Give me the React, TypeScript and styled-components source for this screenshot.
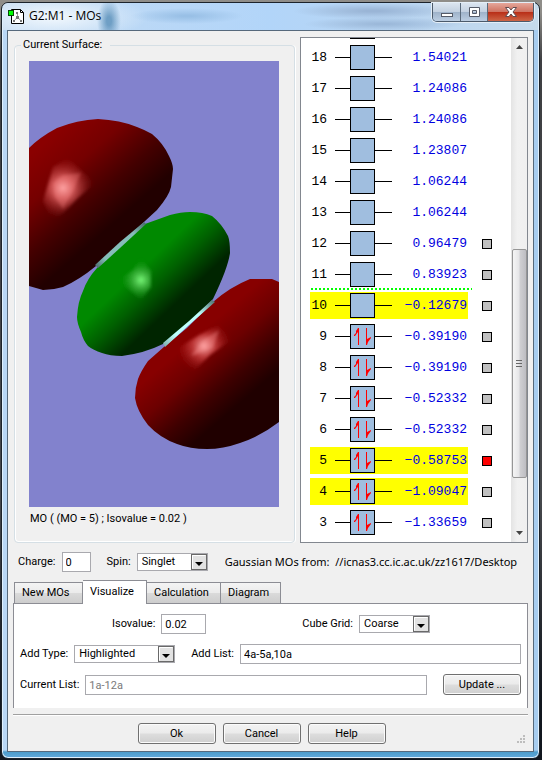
import React, { useState } from 'react';
import styled, { createGlobalStyle, css } from 'styled-components';

const GlobalStyle = createGlobalStyle`
  *, *::before, *::after { box-sizing: border-box; }
  body {
    margin: 0;
    background: #10151c;
    color: #000;
    font: 11px/16px "Roboto", "Liberation Sans", sans-serif;
  }
  button, input, select { font: inherit; color: inherit; }
`;

const Desktop = styled.div`
  display: flex;
  min-height: 100vh;
  padding: 2px 2px 1px 1px;
  background: linear-gradient(#8f8d89 0, #8f8d89 12px, #3e3f42 60px, #46484c 500px, #11161e 700px);
`;

const Window = styled.main`
  flex: 1;
  min-width: 0;
  display: flex;
  flex-direction: column;
  padding: 0 5px 6px;
  border: 1px solid #1c232b;
  border-radius: 7px;
  box-shadow: inset 0 0 0 1px #e0f0fd;
  background:
    linear-gradient(transparent calc(100% - 8px), #4c9ccb calc(100% - 6px), #62a9db 100%),
    linear-gradient(90deg, #b9d7f5 0, #b4d4f5 50%, #a7cdf0 100%);
`;

const TitleBar = styled.header`
  display: flex;
  align-items: flex-start;
  height: 27px;
  margin: 0 -4px;
  padding-right: 4px;
  border-radius: 6px 6px 0 0;
  background:
    radial-gradient(ellipse 12px 22px at 106px 18px, #6f9fc5 20%, transparent 100%),
    radial-gradient(ellipse 56px 8px at 184px 13px, #99c0e6 10%, transparent 100%),
    radial-gradient(ellipse 80px 8px at 370px 8px, #9ab5d6 10%, transparent 100%),
    radial-gradient(ellipse 80px 7px at 380px 21px, #9cb9da 10%, transparent 100%),
    radial-gradient(ellipse 95px 24px at 50px 14px, #edf5fc 10%, transparent 100%),
    linear-gradient(90deg, #c3dbf3, #b2d5f9 50%, #b9d5f1 75%, #c6dbec);
`;

const TitleText = styled.h1`
  flex: 1;
  margin: 4px 0 0 4px;
  font: 12px/18px "Open Sans", "Noto Sans", sans-serif;
`;

const AppIcon = styled.svg`
  margin: 5px 0 0 5px;
`;

const WindowButtons = styled.div`
  display: flex;
  border: 1px solid #4b5a6b;
  border-top: 0;
  border-radius: 0 0 5px 5px;
  overflow: hidden;
  box-shadow: 0 0 0 1px #e4eef7;
`;

const CaptionButton = styled.button<{ $danger?: boolean }>`
  display: grid;
  place-items: center;
  width: ${(p) => (p.$danger ? 46 : 27)}px;
  height: 18px;
  padding: 0;
  border: 0;
  background: ${(p) =>
    p.$danger
      ? 'linear-gradient(#e5a79b, #cf7362 48%, #b92f18 52%, #cd6546)'
      : 'linear-gradient(#dbe5f0, #c3d1e1 48%, #9fb3ca 52%, #bccee2)'};
  & + & { border-left: 1px solid #5a6a7b; }
`;

const Client = styled.section`
  flex: 1;
  display: flex;
  flex-direction: column;
  padding: 6px 5px 7px;
  border: 1px solid #56697c;
  background: #f0f0f0;
`;

const Split = styled.div`
  display: grid;
  grid-template-columns: minmax(0, 1fr) 228px;
  gap: 5px;
`;

const Group = styled.fieldset`
  min-width: 0;
  margin: 0 0 0 1px;
  padding: 8px 15px 14px 14px;
  border: 1px solid #d5dfe5;
  border-radius: 4px;
  box-shadow: inset 1px -1px 0 #fff, 1px 0 0 #fff;
  legend {
    margin-left: -8px;
    padding: 0 8px 0 2px;
  }
`;

const Surface = styled.svg`
  display: block;
  width: 100%;
  height: 446px;
  background: #8282cd;
`;

const Caption = styled.p`
  margin: 4px 1px 0;
`;

const ListPane = styled.div`
  display: flex;
  height: 506px;
  border: 1px solid #82878f;
  background: #fff;
`;

const Orbitals = styled.ol`
  flex: 1;
  display: flex;
  flex-direction: column;
  justify-content: flex-end;
  margin: 0;
  padding: 0 0 4px 9px;
  overflow: hidden;
  list-style: none;
  font: 13px/27px "Liberation Mono", monospace;
`;

const Orbital = styled.li<{ $gap?: boolean }>`
  flex: none;
  display: flex;
  align-items: center;
  gap: 14px;
  height: 31px;
  ${(p) =>
    p.$gap &&
    css`
      background: repeating-linear-gradient(90deg, #0f0 0 2px, transparent 2px 4px) 1px 100% / 161px 2px no-repeat;
    `}
`;

const Level = styled.div<{ $lit: boolean }>`
  display: grid;
  grid-template-columns: 17px 58px 1fr;
  column-gap: 8px;
  align-items: center;
  width: 158px;
  height: 27px;
  padding-right: 1px;
  text-align: right;
  background: ${(p) => (p.$lit ? '#ff0' : 'transparent')};
`;

const Energy = styled.span`
  margin-left: -8px;
  color: #0000e0;
`;

const Pick = styled.input<{ $hot: boolean }>`
  appearance: none;
  width: 10px;
  height: 10px;
  margin: 0;
  border: 1px solid #000;
  background: ${(p) => (p.$hot ? '#f00' : '#c0c0c0')};
`;

const ScrollBar = styled.div`
  display: grid;
  grid-template-rows: 17px 194px 229px 46px 1fr;
  justify-items: center;
  width: 16px;
  background: linear-gradient(90deg, #e4e4e4, #f1f1f1 40%, #efefef);
`;

const ScrollButton = styled.button<{ $row: number }>`
  grid-row: ${(p) => p.$row};
  width: 16px;
  padding: 0;
  border: 0;
  background: none;
  display: grid;
  place-items: center;
`;

const Thumb = styled.div`
  grid-row: 3;
  display: grid;
  place-items: center;
  width: 15px;
  border: 1px solid #969696;
  border-radius: 2px;
  background: linear-gradient(90deg, #f5f5f5, #e6e6e8 45%, #cfcfd2 55%, #bdbdc2);
`;

const Row = styled.div`
  display: flex;
  align-items: center;
`;

const StatusRow = styled(Row)`
  margin: 9px 6px 8px 5px;
  height: 20px;
`;

const Label = styled.label`
  flex: none;
  margin-right: 6px;
`;

const SecondLabel = styled(Label)`
  margin-left: 16px;
`;

const PathText = styled.p`
  flex: 1;
  margin: 0 0 0 17px;
  overflow: hidden;
  white-space: pre;
  font: 11px/18px "Noto Sans", "Open Sans", sans-serif;
`;

const TextBox = styled.input<{ $w?: number }>`
  ${(p) => (p.$w ? css`width: ${p.$w}px;` : css`flex: 1; min-width: 0;`)}
  height: 20px;
  padding: 1px 3px 0;
  border: 1px solid #a9a9ae;
  background: #fff;
  &:read-only { color: #7a7a7a; }
`;

const SelectBox = styled.span<{ $w: number }>`
  position: relative;
  flex: none;
  width: ${(p) => p.$w}px;
  height: 18px;
  svg {
    position: absolute;
    top: 1px;
    right: 1px;
    pointer-events: none;
  }
  select {
    display: block;
    appearance: none;
    width: 100%;
    height: 18px;
    padding: 0 18px 1px 4px;
    border: 1px solid #a9a9ae;
    border-radius: 0;
    background: #fff;
  }
`;

const TabStrip = styled.div`
  display: flex;
  align-items: flex-end;
  height: 23px;
  padding-left: 1px;
`;

const Tab = styled.button<{ $active: boolean; $w: number }>`
  width: ${(p) => p.$w}px;
  height: 21px;
  padding: 0 0 1px 7px;
  text-align: left;
  border: 1px solid #8c8d94;
  border-bottom: 0;
  background: linear-gradient(#f4f4f4, #ebebeb 48%, #dadada 52%, #cdcdcd);
  & + & { border-left-width: 0; }
  ${(p) =>
    p.$active &&
    css`
      height: 24px;
      margin-bottom: -1px;
      padding-bottom: 2px;
      background: #fff;
      z-index: 1;
    `}
`;

const Panel = styled.section`
  display: flex;
  flex-direction: column;
  gap: 10px;
  padding: 10px 6px 13px;
  border: 1px solid #8c8d94;
  border-bottom: 0;
  background: #fff;
`;

const TopFields = styled(Row)`
  justify-content: space-between;
  padding: 0 91px 0 92px;
`;

const PushButton = styled.button`
  width: 78px;
  height: 21px;
  padding: 0;
  border: 1px solid #707070;
  border-radius: 3px;
  box-shadow: inset 0 0 0 1px #fbfbfb;
  background: linear-gradient(#f3f3f3, #ebebeb 48%, #dddddd 52%, #cfcfcf);
`;

const UpdateButton = styled(PushButton)`
  margin-left: 16px;
`;

const Footer = styled.footer`
  display: flex;
  justify-content: center;
  align-items: center;
  gap: 7px;
  position: relative;
  margin-top: 6px;
  padding: 8px 18px 0 0;
  border-top: 1px solid #a0a0a0;
  box-shadow: inset 0 1px 0 #fff;
`;

const Grip = styled.svg`
  position: absolute;
  right: 2px;
  bottom: 0;
`;

type OrbitalLevel = { n?: number; e?: string; pick?: boolean };
const LEVELS: OrbitalLevel[] = [
  {},
  { n: 18, e: '1.54021' },
  { n: 17, e: '1.24086' },
  { n: 16, e: '1.24086' },
  { n: 15, e: '1.23807' },
  { n: 14, e: '1.06244' },
  { n: 13, e: '1.06244' },
  { n: 12, e: '0.96479', pick: true },
  { n: 11, e: '0.83923', pick: true },
  { n: 10, e: '−0.12679', pick: true },
  { n: 9, e: '−0.39190', pick: true },
  { n: 8, e: '−0.39190', pick: true },
  { n: 7, e: '−0.52332', pick: true },
  { n: 6, e: '−0.52332', pick: true },
  { n: 5, e: '−0.58753', pick: true },
  { n: 4, e: '−1.09047', pick: true },
  { n: 3, e: '−1.33659', pick: true },
];
const HIGHLIGHTED = [4, 5, 10];

function OrbitalBox({ filled }: { filled: boolean }) {
  return (
    <svg width="58" height="25" viewBox="0 0 58 25" aria-hidden="true">
      <path d="M0 12.5H57" stroke="#000" />
      <rect x="15.500" y=".5" width="24" height="24" fill="#a0bedf" stroke="#000" />
      {filled && (
        <g fill="none" stroke="#f00">
          <path d="M23.500 4V21M31.500 4V21" />
          <path d="M23 4V8L20 12H19V11L21 9V7Z M32 21V15L34 14L36 13V14L33 18Z" fill="#f00" stroke="none" />
        </g>
      )}
    </svg>
  );
}

function SurfaceView() {
  return (
    <Surface viewBox="0 0 250 446" preserveAspectRatio="xMidYMid slice" role="img" aria-label="Molecular orbital surface">
      <defs>
        <filter id="soft" x="-20%" y="-20%" width="140%" height="140%">
          <feGaussianBlur stdDeviation="1.6" />
        </filter>
        <linearGradient id="redA" gradientUnits="userSpaceOnUse" x1="22" y1="76" x2="92" y2="156">
          <stop offset="0" stopColor="#8a0000" />
          <stop offset=".35" stopColor="#750000" />
          <stop offset=".7" stopColor="#440000" />
          <stop offset="1" stopColor="#220000" />
        </linearGradient>
        <linearGradient id="greenA" gradientUnits="userSpaceOnUse" x1="106" y1="213" x2="140" y2="249">
          <stop offset="0" stopColor="#008900" />
          <stop offset=".45" stopColor="#006000" />
          <stop offset="1" stopColor="#002500" />
        </linearGradient>
        <linearGradient id="redB" gradientUnits="userSpaceOnUse" x1="150" y1="290" x2="202" y2="350">
          <stop offset="0" stopColor="#870000" />
          <stop offset=".35" stopColor="#6c0000" />
          <stop offset=".7" stopColor="#3e0000" />
          <stop offset="1" stopColor="#200000" />
        </linearGradient>
        <radialGradient id="shineA" gradientUnits="userSpaceOnUse" cx="34" cy="127" r="31">
          <stop offset="0" stopColor="#ffb0b0" />
          <stop offset=".35" stopColor="#e56868" stopOpacity=".8" />
          <stop offset="1" stopColor="#a02020" stopOpacity="0" />
        </radialGradient>
        <radialGradient id="shineG" gradientUnits="userSpaceOnUse" cx="112" cy="219" r="21">
          <stop offset="0" stopColor="#78f878" />
          <stop offset=".4" stopColor="#44b844" stopOpacity=".8" />
          <stop offset="1" stopColor="#109010" stopOpacity="0" />
        </radialGradient>
        <radialGradient id="shineB" gradientUnits="userSpaceOnUse" cx="175" cy="285" r="28">
          <stop offset="0" stopColor="#ffaaaa" />
          <stop offset=".4" stopColor="#cc4545" stopOpacity=".8" />
          <stop offset="1" stopColor="#a01010" stopOpacity="0" />
        </radialGradient>
        <linearGradient id="bond" x1="0" y1="1" x2="1" y2="0">
          <stop offset="0" stopColor="#456463" />
          <stop offset=".2" stopColor="#86bdba" />
          <stop offset=".75" stopColor="#86bdba" />
          <stop offset="1" stopColor="#456463" />
        </linearGradient>
        <linearGradient id="bondLit" x1="0" y1="1" x2="1" y2="0">
          <stop offset="0" stopColor="#79a9a7" />
          <stop offset=".25" stopColor="#bdfffc" />
          <stop offset=".7" stopColor="#bdfffc" />
          <stop offset="1" stopColor="#486b69" />
        </linearGradient>
      </defs>
      <path
        d="M0 87Q11 76 28 67Q48 59 69 58Q91 59 108 66Q116 69 123 73Q134 82 140 95Q144 103 144 108L142 126Q140 135 128 149L91 183L67 205Q50 219 34 226Q24 229 14 229L0 225Z"
        fill="url(#redA)"
      />
      <g filter="url(#soft)">
        <path d="M24 106L39 97L66 122L48 138L34 152L23 160L14 140Z" fill="url(#shineA)" />
        <path d="M34 114L52 112L44 130L34 148L26 136L24 122Z" fill="#f88" opacity=".3" />
      </g>
      <path
        d="M116 163L141 154Q152 151 161 151Q174 151 183 155Q193 163 199 175Q201 180 201 192Q199 207 184 238L160 263L134 283Q116 292 93 295Q81 295 73 292Q64 289 59 285Q54 279 52 271Q48 262 48 256Q49 240 54 230Q58 218 68 207L91 186Z"
        fill="url(#greenA)"
      />
      <path d="M89 219L104 209L112 197L122 210L122 226L112 239Z" fill="url(#shineG)" filter="url(#soft)" />
      <path
        d="M184 241Q201 226 221 218H243L250 221V361Q232 375 211 382Q194 388 178 388Q161 388 148 383Q131 377 119 364Q108 350 106 337Q106 327 109 318Q112 310 119 300L136 285L158 267Z"
        fill="url(#redB)"
      />
      <g filter="url(#soft)">
        <path d="M151 286L170 274L190 264L204 278L181 294L160 315L151 304Z" fill="url(#shineB)" />
        <path d="M162 295L174 279L190 269L184 287Z" fill="#f99" opacity=".35" />
      </g>
      <path d="M66 204L91 181L115 161L117 163L91 187L69 207Z" fill="url(#bond)" />
      <path d="M134 282L160 260L183 239L186 241L160 264L136 286Z" fill="url(#bondLit)" />
    </Surface>
  );
}

function DropDown({ id, w, value }: { id: string; w: number; value: string }) {
  return (
    <SelectBox $w={w}>
      <select id={id} defaultValue={value}>
        <option>{value}</option>
      </select>
      <svg width="16" height="16" viewBox="0 0 16 16" aria-hidden="true">
        <rect x=".5" y=".5" width="15" height="15" fill="#e2e2e2" stroke="#696969" />
        <path d="M1.500 14.500V1.500H14.500" fill="none" stroke="#fff" />
        <path d="M4 8H12L8 12Z" fill="#000" />
      </svg>
    </SelectBox>
  );
}

const TABS = [
  { name: 'New MOs', w: 69 },
  { name: 'Visualize', w: 64 },
  { name: 'Calculation', w: 74 },
  { name: 'Diagram', w: 60 },
];

export default function App() {
  const [tab, setTab] = useState('Visualize');
  return (
    <>
      <GlobalStyle />
      <Desktop>
        <Window>
          <TitleBar>
            <AppIcon width="17" height="17" viewBox="0 0 17 17" aria-hidden="true">
              <path d="M3.500 1.500H12.500L15.500 4.500V15.500H3.500Z" fill="#fff" stroke="#000" />
              <path d="M12.500 1.500V4.500H15.500" fill="none" stroke="#000" />
              <path d="M9.500 5V9L6 13M9.500 9L13 13" fill="none" stroke="#999" />
              <path d="M8 4h2v2h-2zM8 8h3v3h-3zM5 12h2v2h-2zM12 12h2v2h-2z" fill="#777" />
              <rect x=".5" y="2.500" width="5" height="5" fill="#0f0" stroke="#064b06" />
            </AppIcon>
            <TitleText>G2:M1 - MOs</TitleText>
            <WindowButtons>
              <CaptionButton aria-label="Minimize">
                <svg width="14" height="12" viewBox="0 0 14 12">
                  <rect x="1.500" y="7.500" width="11" height="3" fill="#fff" stroke="#555b68" />
                </svg>
              </CaptionButton>
              <CaptionButton aria-label="Maximize">
                <svg width="13" height="12" viewBox="0 0 13 12">
                  <path d="M1.500 1.500H11.500V10.500H1.500ZM4.500 4.500V7.500H8.500V4.500Z" fill="#fff" fillRule="evenodd" stroke="#555b68" />
                </svg>
              </CaptionButton>
              <CaptionButton aria-label="Close" $danger>
                <svg width="14" height="12" viewBox="0 0 14 12">
                  <path
                    d="M1.500 1.500H5L7 4L9 1.500H12.500L9 6L12.500 10.500H9L7 8L5 10.500H1.500L5 6Z"
                    fill="#fff"
                    stroke="#614a4e"
                  />
                </svg>
              </CaptionButton>
            </WindowButtons>
          </TitleBar>

          <Client>
            <Split>
              <Group>
                <legend>Current Surface:</legend>
                <SurfaceView />
                <Caption>MO ( (MO = 5) ; Isovalue = 0.02 )</Caption>
              </Group>
              <ListPane>
                <Orbitals>
                  {LEVELS.map(({ n = 0, e, pick }) => (
                    <Orbital key={n} $gap={n === 11}>
                      <Level $lit={HIGHLIGHTED.includes(n)}>
                        <span>{n || ''}</span>
                        <OrbitalBox filled={n > 0 && n < 10} />
                        <Energy>{e}</Energy>
                      </Level>
                      {pick && <Pick type="checkbox" $hot={n === 5} defaultChecked={n === 5} aria-label={`Orbital ${n}`} />}
                    </Orbital>
                  ))}
                </Orbitals>
                <ScrollBar>
                  <ScrollButton $row={1} aria-label="Scroll up">
                    <svg width="7" height="4" viewBox="0 0 7 4">
                      <path d="M0 4L3.500 0L7 4Z" fill="#444" />
                    </svg>
                  </ScrollButton>
                  <Thumb>
                    <svg width="7" height="9" viewBox="0 0 7 9">
                      <path d="M0 1.500H6M0 4.500H6M0 7.500H6" stroke="#666" />
                    </svg>
                  </Thumb>
                  <ScrollButton $row={5} aria-label="Scroll down">
                    <svg width="7" height="4" viewBox="0 0 7 4">
                      <path d="M0 0L3.500 4L7 0Z" fill="#444" />
                    </svg>
                  </ScrollButton>
                </ScrollBar>
              </ListPane>
            </Split>

            <StatusRow>
              <Label htmlFor="charge">Charge:</Label>
              <TextBox id="charge" $w={29} defaultValue="0" />
              <SecondLabel htmlFor="spin">Spin:</SecondLabel>
              <DropDown id="spin" w={71} value="Singlet" />
              <PathText>Gaussian MOs from:  //icnas3.cc.ic.ac.uk/zz1617/Desktop</PathText>
            </StatusRow>

            <TabStrip role="tablist">
              {TABS.map((t) => (
                <Tab key={t.name} role="tab" aria-selected={tab === t.name} $active={tab === t.name} $w={t.w} onClick={() => setTab(t.name)}>
                  {t.name}
                </Tab>
              ))}
            </TabStrip>
            <Panel role="tabpanel">
              <TopFields>
                <Row>
                  <Label htmlFor="iso">Isovalue:</Label>
                  <TextBox id="iso" $w={45} defaultValue="0.02" />
                </Row>
                <Row>
                  <Label htmlFor="grid">Cube Grid:</Label>
                  <DropDown id="grid" w={71} value="Coarse" />
                </Row>
              </TopFields>
              <Row>
                <Label htmlFor="type">Add Type:</Label>
                <DropDown id="type" w={101} value="Highlighted" />
                <SecondLabel htmlFor="add">Add List:</SecondLabel>
                <TextBox id="add" defaultValue="4a-5a,10a" />
              </Row>
              <Row>
                <Label htmlFor="current">Current List:</Label>
                <TextBox id="current" readOnly value="1a-12a" />
                <UpdateButton>Update ...</UpdateButton>
              </Row>
            </Panel>

            <Footer>
              <PushButton>Ok</PushButton>
              <PushButton>Cancel</PushButton>
              <PushButton>Help</PushButton>
              <Grip width="9" height="9" viewBox="0 0 9 9" aria-hidden="true">
                <path d="M6 0h2v2h-2zM3 3h2v2h-2zM6 3h2v2h-2zM0 6h2v2h-2zM3 6h2v2h-2zM6 6h2v2h-2z" fill="#bdbdbd" />
              </Grip>
            </Footer>
          </Client>
        </Window>
      </Desktop>
    </>
  );
}
